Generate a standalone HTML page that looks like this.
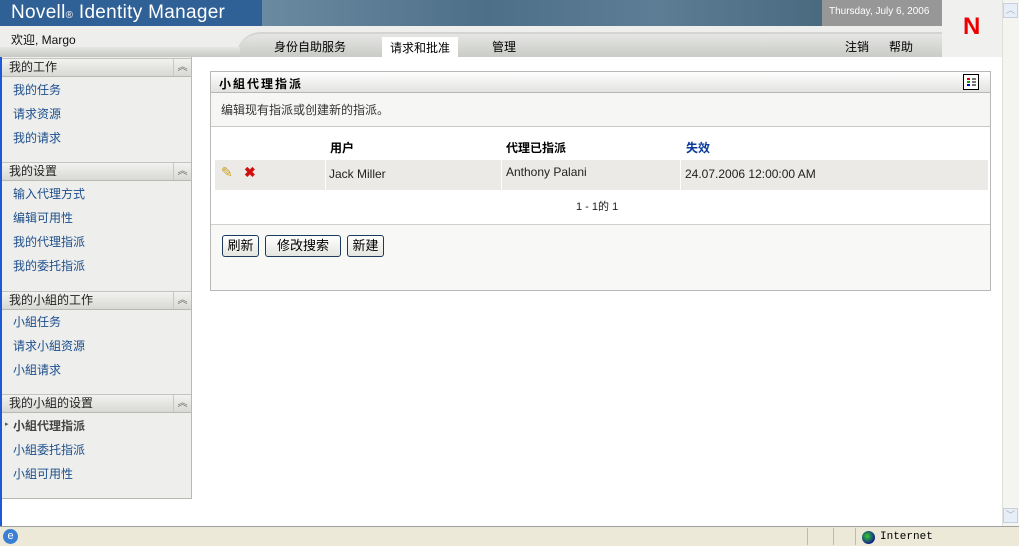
<!DOCTYPE html>
<html><head><meta charset="utf-8"><style>
*{margin:0;padding:0;box-sizing:border-box}
body{width:1019px;height:546px;overflow:hidden;background:#fff;font-family:"Liberation Sans","Noto Sans CJK SC","WenQuanYi Zen Hei",sans-serif;font-size:12px;color:#000;position:relative}
.a{position:absolute;white-space:nowrap}
.sh{position:absolute;left:2px;width:189px;height:19px;background:linear-gradient(#f2f2f0,#d8d8d4);border-top:1px solid #c4c4c0;border-bottom:1px solid #b8b8b4;font-size:12px;line-height:17px;padding-left:7px;color:#222}
.sh i{position:absolute;right:0;top:0;width:18px;height:17px;border-left:1px solid #c8c8c4;font-style:normal;font-size:10px;text-align:center;color:#666;line-height:17px}
.lk{position:absolute;left:13px;color:#1c4e8c;font-size:12px}
.btn{position:absolute;top:235px;height:22px;border:1px solid #1c3a5c;border-radius:3px;background:linear-gradient(#fff,#e4e4e0);font-size:13px;line-height:19px;text-align:center}
</style></head><body>
<div class="a" style="left:0;top:0;width:262px;height:26px;background:#2f6096"></div>
<div class="a" style="left:262px;top:0;width:560px;height:26px;background:linear-gradient(90deg,#6a8aa0,#4d6f88 40%,#5c7d94 70%,#4a6a80)"></div>
<div class="a" style="left:822px;top:0;width:120px;height:26px;background:#979797"></div>
<div class="a" style="left:11px;top:2px;color:#fff;font-size:19px;line-height:22px;letter-spacing:0.3px">Novell<span style="font-size:10px">®</span> Identity Manager</div>
<div class="a" style="left:829px;top:6px;color:#fff;font-size:10px">Thursday, July 6, 2006</div>
<div class="a" style="left:942px;top:0;width:60px;height:57px;background:#f0f0ee"></div>
<div class="a" style="left:963px;top:14px;color:#e00;font-size:24px;font-weight:bold;line-height:26px">N</div>
<div class="a" style="left:0;top:26px;width:942px;height:31px;background:#eeeeec"></div>
<div class="a" style="left:236px;top:32px;width:706px;height:25px;background:linear-gradient(#e6e7e4,#c9cbc7);border-top:2px solid #d4d5d2;border-radius:30px 0 0 0"></div>
<div class="a" style="left:0;top:47px;width:240px;height:10px;background:linear-gradient(#e6e7e4,#c6c8c4)"></div>
<div class="a" style="left:11px;top:31px;font-size:12px;color:#111">欢迎, Margo</div>
<div class="a" style="left:274px;top:38px;font-size:12px">身份自助服务</div>
<div class="a" style="left:382px;top:37px;width:76px;height:20px;background:#fff"></div>
<div class="a" style="left:390px;top:39px;font-size:12px">请求和批准</div>
<div class="a" style="left:492px;top:38px;font-size:12px">管理</div>
<div class="a" style="left:845px;top:38px;font-size:12px">注销</div>
<div class="a" style="left:889px;top:38px;font-size:12px">帮助</div>
<div class="a" style="left:1002px;top:0;width:17px;height:526px;background:#f4f4f0;border-left:1px solid #e0e0da"></div>
<div class="a" style="left:1003px;top:3px;width:15px;height:15px;background:#e8eef8;border:1px solid #c8d0e0;font-size:9px;color:#aab;text-align:center;line-height:13px">︿</div>
<div class="a" style="left:1003px;top:508px;width:15px;height:15px;background:#e8eef8;border:1px solid #c8d0e0;font-size:9px;color:#aab;text-align:center;line-height:13px">﹀</div>
<div class="a" style="left:0;top:57px;width:2px;height:469px;background:#1a5ad8"></div>
<div class="a" style="left:2px;top:57px;width:190px;height:442px;background:#eeeeec;border-right:1px solid #b8b8b4;border-bottom:1px solid #b8b8b4"></div>
<div class="sh" style="top:58px">我的工作<i>︽</i></div>
<div class="lk" style="top:81px">我的任务</div>
<div class="lk" style="top:105px">请求资源</div>
<div class="lk" style="top:129px">我的请求</div>
<div class="sh" style="top:162px">我的设置<i>︽</i></div>
<div class="lk" style="top:185px">输入代理方式</div>
<div class="lk" style="top:209px">编辑可用性</div>
<div class="lk" style="top:233px">我的代理指派</div>
<div class="lk" style="top:257px">我的委托指派</div>
<div class="sh" style="top:291px">我的小組的工作<i>︽</i></div>
<div class="lk" style="top:313px">小組任务</div>
<div class="lk" style="top:337px">请求小組资源</div>
<div class="lk" style="top:361px">小組请求</div>
<div class="sh" style="top:394px">我的小組的设置<i>︽</i></div>
<div class="a" style="left:5px;top:420px;font-size:7px;color:#555">▸</div>
<div class="lk" style="top:417px;color:#444;font-weight:bold">小組代理指派</div>
<div class="lk" style="top:441px">小組委托指派</div>
<div class="lk" style="top:465px">小組可用性</div>
<div class="a" style="left:210px;top:71px;width:781px;height:220px;border:1px solid #b8b8b8;background:#fff"></div>
<div class="a" style="left:211px;top:72px;width:779px;height:21px;background:linear-gradient(#fff,#e2e2e0);border-bottom:1px solid #b8b8b8"></div>
<div class="a" style="left:219px;top:75px;font-size:12px;font-weight:bold;letter-spacing:2px">小組代理指派</div>
<div class="a" style="left:963px;top:74px;width:16px;height:16px;border:1px solid #000;background:#fff"><div style="position:absolute;left:3px;top:3px;width:3px;height:2px;background:#e00;box-shadow:0 3px #0a0,0 6px #00e"></div><div style="position:absolute;left:8px;top:3px;width:4px;height:2px;background:#777;box-shadow:0 3px #777,0 6px #777"></div></div>
<div class="a" style="left:211px;top:93px;width:779px;height:34px;background:#f6f6f4;border-bottom:1px solid #c8c8c8"></div>
<div class="a" style="left:221px;top:101px;font-size:12px;color:#333">编辑现有指派或创建新的指派。</div>
<div class="a" style="left:330px;top:139px;font-size:12px;font-weight:bold">用户</div>
<div class="a" style="left:506px;top:139px;font-size:12px;font-weight:bold">代理已指派</div>
<div class="a" style="left:686px;top:139px;font-size:12px;font-weight:bold;color:#0a3a9a">失效</div>
<div class="a" style="left:215px;top:160px;width:110px;height:30px;background:#ebeae6"></div>
<div class="a" style="left:326px;top:160px;width:175px;height:30px;background:#ebeae6"></div>
<div class="a" style="left:502px;top:160px;width:178px;height:30px;background:#ebeae6"></div>
<div class="a" style="left:681px;top:160px;width:307px;height:30px;background:#ebeae6"></div>
<div class="a" style="left:221px;top:164px;font-size:14px;color:#c8a020">✎</div>
<div class="a" style="left:244px;top:164px;font-size:14px;font-weight:bold;color:#d01010">✖</div>
<div class="a" style="left:329px;top:167px;font-size:12px;color:#222">Jack Miller</div>
<div class="a" style="left:506px;top:165px;font-size:12px;color:#222">Anthony Palani</div>
<div class="a" style="left:685px;top:167px;font-size:12px;color:#222">24.07.2006 12:00:00 AM</div>
<div class="a" style="left:576px;top:198px;font-size:11px;color:#222">1 - 1的 1</div>
<div class="a" style="left:211px;top:224px;width:779px;height:66px;background:#f8f8f6;border-top:1px solid #d0d0d0"></div>
<div class="btn" style="left:222px;width:37px">刷新</div>
<div class="btn" style="left:265px;width:76px">修改搜索</div>
<div class="btn" style="left:347px;width:37px">新建</div>
<div class="a" style="left:0;top:526px;width:1019px;height:20px;background:#ece9d8;border-top:1px solid #a0a0a0"></div>
<div class="a" style="left:3px;top:529px;width:15px;height:15px;border-radius:50%;background:#3b7fd4;color:#fff;font-size:11px;text-align:center;line-height:15px">e</div>
<div class="a" style="left:807px;top:528px;width:1px;height:17px;background:#c0bca8"></div>
<div class="a" style="left:833px;top:528px;width:1px;height:17px;background:#c0bca8"></div>
<div class="a" style="left:855px;top:528px;width:1px;height:17px;background:#c0bca8"></div>
<div class="a" style="left:862px;top:531px;width:13px;height:13px;border-radius:50%;background:radial-gradient(circle at 40% 40%,#3c3,#128 70%)"></div>
<div class="a" style="left:880px;top:531px;font-family:'Liberation Mono',monospace;font-size:11px">Internet</div>
</body></html>
